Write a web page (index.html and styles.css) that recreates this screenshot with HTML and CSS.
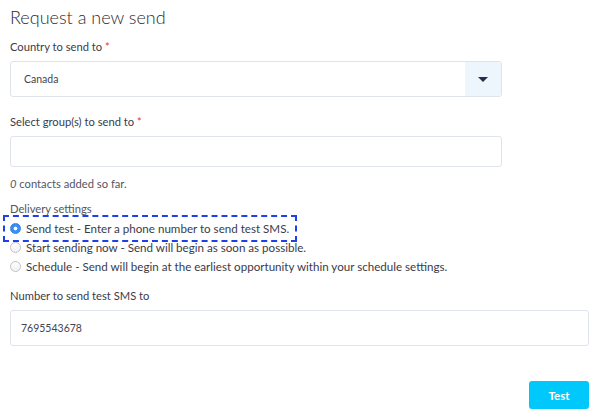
FILE: index.html
```html
<!DOCTYPE html>
<html lang="en">
<head>
  <meta charset="UTF-8">
  <meta name="viewport" content="width=device-width,initial-scale=1.0">
  <title>Request a new send</title>
  <link rel="stylesheet" href="styles.css">
</head>
<body>
  <form class="send-form">
    <h1>Request a new send</h1>

    <div class="field narrow">
      <label class="field-label">Country to send to <span class="req">*</span></label>
      <div class="select">
        <span class="select-value">Canada</span>
        <span class="select-btn"><span class="caret"></span></span>
      </div>
    </div>

    <div class="field narrow groups">
      <label class="field-label">Select group(s) to send to <span class="req">*</span></label>
      <div class="input short"></div>
    </div>

    <p class="help"><em>0</em> contacts added so far.</p>

    <div class="delivery">
      <div class="delivery-title">Delivery settings</div>
      <label class="radio focused"><input type="radio" name="mode" checked> Send test - Enter a phone number to send test SMS.</label>
      <label class="radio"><input type="radio" name="mode"> Start sending now - Send will begin as soon as possible.</label>
      <label class="radio"><input type="radio" name="mode"> Schedule - Send will begin at the earliest opportunity within your schedule settings.</label>
    </div>

    <div class="field wide">
      <label class="field-label">Number to send test SMS to</label>
      <div class="input phone">7695543678</div>
    </div>

    <div class="actions">
      <button type="button" class="btn-test">Test</button>
    </div>
  </form>
</body>
</html>
```

FILE: styles.css
```css
body {
  margin: 0;
  font-family: Lato, "Noto Sans", sans-serif;
  font-size: 11.2px;
  color: #3b3b48;
  background: #fff;
}
.send-form {
  padding: 0 11px 0 10px;
}
h1 {
  margin: 5px 0 0;
  font-size: 18px;
  line-height: 24px;
  font-weight: 300;
  color: #2a2a33;
}
.field {
  margin-top: 10px;
}
.field.narrow { width: 492px; }
.field.groups { margin-top: 17px; }
.field.wide { margin-top: 12px; }
.field-label {
  display: block;
  line-height: 16px;
  margin-bottom: 6px;
}
.req { color: #e8303a; }
.select, .input {
  box-sizing: border-box;
  border: 1px solid #dfe3ec;
  border-radius: 3px;
  background: #fff;
}
.select {
  display: flex;
  height: 36px;
  overflow: hidden;
}
.select-value {
  flex: 1;
  display: flex;
  align-items: center;
  padding-left: 13px;
  font-size: 10.5px;
  color: #444450;
}
.select-btn {
  width: 36px;
  background: #eef6fd;
  display: flex;
  align-items: center;
  justify-content: center;
}
.caret {
  width: 0; height: 0;
  border-left: 5px solid transparent;
  border-right: 5px solid transparent;
  border-top: 5px solid #2b2b4a;
}
.input {
  height: 36px;
  display: flex;
  align-items: center;
  padding-left: 10px;
  font-size: 10.5px;
  color: #444450;
}
.input.short { height: 31px; }
.help {
  margin: 9px 0 0;
  line-height: 16px;
  color: #55555f;
}
.delivery {
  margin-top: 9px;
}
.delivery-title {
  line-height: 16px;
  color: #55555f;
  margin-bottom: 2px;
}
.radio {
  display: flex;
  align-items: center;
  gap: 5px;
  height: 19px;
  width: max-content;
  font-size: 11.6px;
  color: #3b3b48;
}
.radio input {
  appearance: none;
  margin: 0;
  width: 11px;
  height: 11px;
  border: 1px solid #c2c2c7;
  border-radius: 50%;
  background: linear-gradient(#fff, #f1f1f3);
  box-sizing: border-box;
}
.radio input:checked {
  border-color: #2f7fe6;
  background: radial-gradient(circle, #fff 0 1.6px, #3d8ef3 2.2px);
}
.radio.focused {
  outline: 2px dashed #1f3fe8;
  outline-offset: 2px;
  margin-left: -3px;
  padding-left: 3px;
  padding-right: 4px;
}
.actions {
  display: flex;
  justify-content: flex-end;
  margin-top: 35px;
}
.btn-test {
  width: 60px;
  height: 28px;
  border: 0;
  border-radius: 3px;
  background: #00c8fb;
  color: #fff;
  font-family: inherit;
  font-size: 11.5px;
  font-weight: 700;
}
```
